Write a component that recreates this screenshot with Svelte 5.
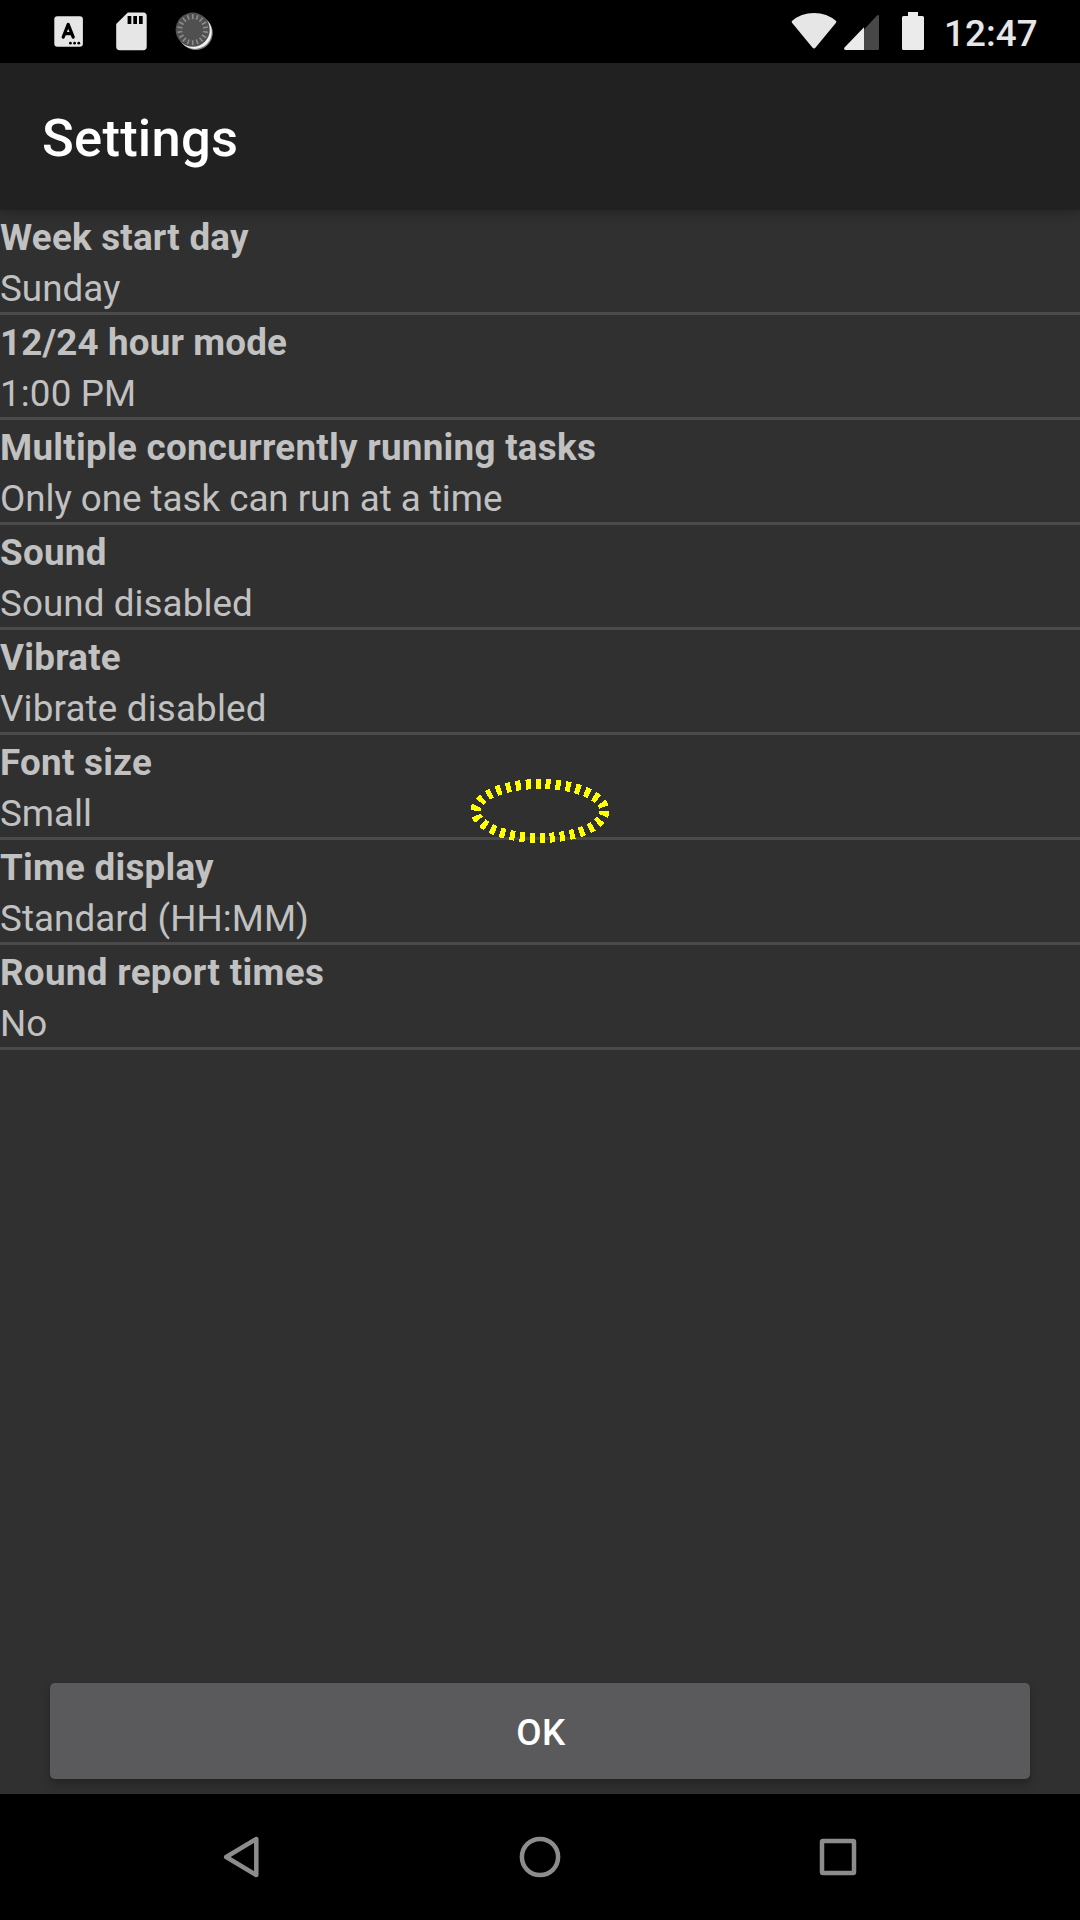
<script>
  // Each entry: name, value, and the letter spacing (px) of either line.
  const settings = [
    ['Week start day', 'Sunday', 0.22, 0.05],
    ['12/24 hour mode', '1:00 PM', 0.16, 0.15],
    ['Multiple concurrently running tasks', 'Only one task can run at a time', 0.28, -0.03],
    ['Sound', 'Sound disabled', 0.3, 0.09],
    ['Vibrate', 'Vibrate disabled', 0.25, 0.18],
    ['Font size', 'Small', 0.27, 0],
    ['Time display', 'Standard (HH:MM)', 0.24, 0.08],
    ['Round report times', 'No', 0.32, 0],
  ];
  const ticks = Array.from({ length: 18 }, (_, i) => {
    const a = (i * Math.PI) / 9 + Math.PI / 18;
    return `M${17.7 + 10.5 * Math.cos(a)} ${17.7 + 10.5 * Math.sin(a)}L${17.7 + 15.5 * Math.cos(a)} ${17.7 + 15.5 * Math.sin(a)}`;
  }).join('');
</script>

<div class="screen">
  <div class="status">
    <div class="notifications">
      <svg width="30" height="33" viewBox="0 0 30 33">
        <rect x="0.3" y="1.2" width="28.6" height="30.6" rx="3" fill="#e6e6e6" />
        <path d="M9.2 22.2L14.2 9.4L19.2 22.2M11 18.6H17.4" fill="none" stroke="#000" stroke-width="3.2" stroke-linecap="round" stroke-linejoin="round" />
        <circle cx="16.4" cy="28.2" r="1.4" /><circle cx="20.6" cy="28.2" r="1.4" /><circle cx="24.8" cy="28.2" r="1.4" />
      </svg>
      <svg width="31" height="39" viewBox="0 0 31 39">
        <path d="M11.8 .5H27.2Q30.7 .5 30.7 4V34.8Q30.7 38.2 27.2 38.2H3.7Q.2 38.2 .2 34.8V12.1Z" fill="#e6e6e6" />
        <path d="M11.6 4h3.7v8h-3.7zM17.3 4H21v8h-3.7zM23 4h3.7v8H23z" />
      </svg>
      <svg class="spinner" width="39" height="39" viewBox="0 0 39 39">
        <circle cx="20.8" cy="21" r="17" fill="#777" />
        <circle cx="19.8" cy="19.9" r="17" fill="#f0f0f0" />
        <circle cx="17.7" cy="17.7" r="17.1" fill="#505050" />
        <path d={ticks} stroke="#8b8b8b" stroke-width="1.6" />
      </svg>
    </div>
    <div class="system">
      <svg class="wifi" width="46" height="38" viewBox="0 0 46 38">
        <path d="M.6 9.2Q10 1 23 1T45.4 9.2Q45.2 10.6 44.4 11.6L24.6 35.6Q23 37.5 21.4 35.6L1.6 11.6Q.8 10.6 .6 9.2Z" fill="#e6e6e6" />
      </svg>
      <svg class="signal" width="36" height="36" viewBox="0 0 36 36">
        <path d="M20 14.5L33 .6Q35 -.8 35 1.5V33.5Q35 35 33.5 35H20Z" fill="#474747" />
        <path d="M20 12.2V35H1.2Q-.6 34.4 .5 32.4Z" fill="#ebebeb" />
      </svg>
      <svg class="battery" width="22" height="38" viewBox="0 0 22 38">
        <path d="M6 0H16V4H20.5Q22 4 22 5.5V36.5Q22 38 20.5 38H1.5Q0 38 0 36.5V5.5Q0 4 1.5 4H6Z" fill="#ebebeb" />
      </svg>
      <span class="clock">12:47</span>
    </div>
  </div>

  <header>Settings</header>

  <main>
    {#each settings as [name, value, nameSpacing, valueSpacing]}
      <div class="row">
        <div class="name" style:letter-spacing="{nameSpacing}px">{name}</div>
        <div class="value" style:letter-spacing="{valueSpacing}px">{value}</div>
      </div>
    {/each}
    <svg class="marker" width="144" height="68" viewBox="0 0 144 68" shape-rendering="crispEdges">
      <ellipse cx="72" cy="34" rx="64.5" ry="27" fill="none" stroke="#ff0" stroke-width="10" stroke-dasharray="5 5" />
    </svg>
  </main>

  <footer><button>OK</button></footer>

  <nav>
    <svg width="42" height="42" viewBox="0 0 42 42"><path d="M35.3 3V39L5.2 21Z" /></svg>
    <svg width="42" height="42" viewBox="0 0 42 42"><circle cx="21" cy="21" r="18.1" /></svg>
    <svg width="42" height="42" viewBox="0 0 42 42"><rect x="5" y="5" width="32" height="32" rx="1" /></svg>
  </nav>
</div>

<style>
  :global(body) {
    margin: 0;
    background: #303030;
  }
  .screen {
    display: flex;
    flex-direction: column;
    width: 1080px;
    height: 1920px;
    overflow: hidden;
    background: #303030;
    font-family: Roboto, sans-serif;
  }
  svg {
    display: block;
    flex: none;
  }
  .status {
    display: flex;
    justify-content: space-between;
    box-sizing: border-box;
    height: 63px;
    padding-left: 54px;
    background: #000;
  }
  .notifications,
  .system {
    display: flex;
    align-items: center;
  }
  .notifications {
    gap: 32px;
  }
  .spinner {
    margin-left: -4px;
  }
  .system {
    width: 289px;
  }
  .wifi {
    margin-right: 7px;
    margin-top: -1px;
  }
  .signal {
    margin-right: 22px;
    margin-top: 3px;
  }
  .battery {
    margin-right: 20px;
    margin-top: -1px;
  }
  .clock {
    font-size: 36.75px;
    font-weight: 500;
    line-height: 63px;
    letter-spacing: 0.1px;
    color: #e6e6e6;
    padding-top: 4px;
  }
  header {
    position: relative;
    box-sizing: border-box;
    height: 147px;
    padding-left: 42px;
    background: #212121;
    box-shadow: 0 2px 12px rgba(0, 0, 0, 0.3);
    color: #fff;
    font-size: 52.5px;
    font-weight: 500;
    line-height: 151px;
    letter-spacing: 0.25px;
  }
  main {
    position: relative;
    flex: 1;
  }
  .row {
    box-sizing: border-box;
    height: 105px;
    padding-top: 2px;
    border-bottom: 3px solid #4a4a4a;
    color: #c1c1c1;
    font-size: 36.75px;
    line-height: 51px;
    white-space: nowrap;
  }
  .name {
    font-weight: 700;
  }
  .marker {
    position: absolute;
    left: 468px;
    top: 567px;
  }
  footer {
    display: flex;
    padding: 0 50px 15px;
  }
  button {
    flex: 1;
    height: 96px;
    border: 0;
    border-radius: 5px;
    background: #5a5a5c;
    box-shadow: 0 5px 8px rgba(0, 0, 0, 0.26);
    color: #fff;
    font: 500 36.75px / 96px Roboto, sans-serif;
    letter-spacing: 0.5px;
    padding: 2px 0 0 2px;
  }
  nav {
    position: relative;
    display: flex;
    align-items: center;
    justify-content: center;
    gap: 256px;
    height: 126px;
    background: #000;
  }
  nav svg {
    fill: none;
    stroke: #8c8c8c;
    stroke-width: 4.5;
    stroke-linejoin: round;
  }
</style>
